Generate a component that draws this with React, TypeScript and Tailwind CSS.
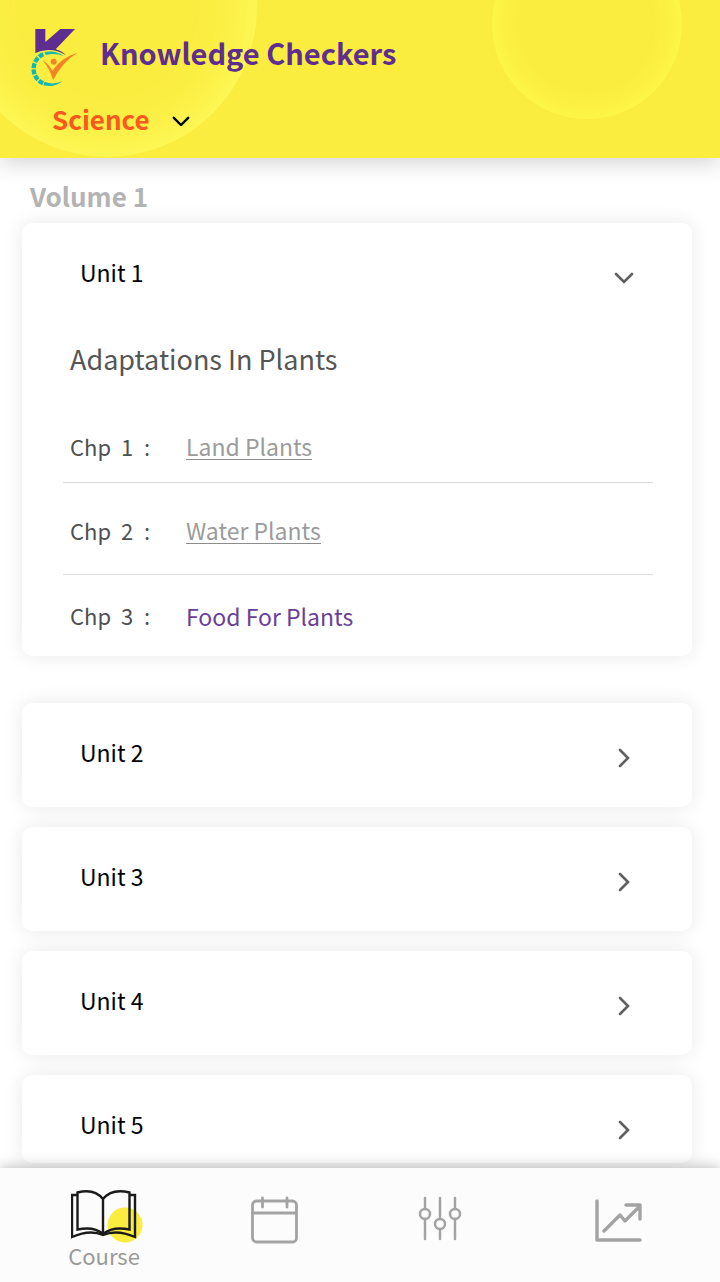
import { useState } from "react";

type Chapter = {
  number: number;
  title: string;
  done: boolean;
};

type Unit = {
  id: number;
  title?: string;
  chapters: Chapter[];
};

const units: Unit[] = [
  {
    id: 1,
    title: "Adaptations In Plants",
    chapters: [
      { number: 1, title: "Land Plants", done: true },
      { number: 2, title: "Water Plants", done: true },
      { number: 3, title: "Food For Plants", done: false },
    ],
  },
  { id: 2, chapters: [] },
  { id: 3, chapters: [] },
  { id: 4, chapters: [] },
  { id: 5, chapters: [] },
];

function Logo() {
  return (
    <svg viewBox="30 24 144 180" className="w-12 h-[60px] shrink-0" aria-hidden="true">
      <path
        d="M46 27H76V66L121 27H165L107 88Q126 93 138 106Q112 89 84 90Q62 91 46 99Z"
        fill="#5f2c91"
      />
      <path
        d="M70 103A47 47 0 0 0 70 190"
        fill="none"
        stroke="#12b9b4"
        strokeWidth="13"
        strokeDasharray="15 4"
      />
      <path d="M74 96Q108 90 131 108Q105 98 77 105Z" fill="#12b9b4" />
      <path d="M74 185Q98 196 128 184Q102 204 70 196Z" fill="#12b9b4" />
      <circle cx="101" cy="125" r="9" fill="#f58228" />
      <path
        d="M67 120Q86 132 97 152Q125 112 173 98Q128 124 99 181Q90 146 67 120Z"
        fill="#f58228"
      />
    </svg>
  );
}

function Chevron({ className }: { className: string }) {
  return (
    <svg
      viewBox="0 0 20 12"
      className={className}
      fill="none"
      stroke="currentColor"
      strokeWidth="2.6"
      strokeLinecap="round"
      aria-hidden="true"
    >
      <path d="M2 2L10 10L18 2" />
    </svg>
  );
}

function Header() {
  return (
    <header className="relative z-10 bg-[#fbed40] shadow-[0_6px_20px_rgba(0,0,0,0.16)] pt-7 pb-[18px]">
      <div className="absolute inset-0 overflow-hidden" aria-hidden="true">
        <div className="absolute -left-[43px] -top-[143px] size-[300px] rounded-full shadow-[inset_0_0_60px_#ffff66]" />
        <div className="absolute left-[492px] -top-[71px] size-[190px] rounded-full shadow-[inset_0_0_32px_#ffff4d]" />
      </div>
      <div className="relative flex gap-[22px] pl-[30px]">
        <Logo />
        <h1 className="text-[29px] leading-[48px] font-bold text-[#5f2c91]">
          Knowledge Checkers
        </h1>
      </div>
      <div className="relative flex items-center w-fit ml-[52px] mt-2.5">
        <select
          aria-label="Subject"
          className="appearance-none bg-transparent pr-10 text-[26px] leading-[42px] font-bold text-[#f9581f] field-sizing-content"
        >
          <option>Science</option>
        </select>
        <Chevron className="absolute right-0 mt-1 w-[18px] text-black pointer-events-none" />
      </div>
    </header>
  );
}

function ChapterRow({ chapter }: { chapter: Chapter }) {
  return (
    <li className="flex items-center h-[92px] pt-1 first:h-[68px] first:pt-0 first:pb-1 last:h-[81px] last:pt-0 pl-[7px] border-b border-[#dedede] last:border-b-0 text-[22px] text-[#505050]">
      <span className="w-[51px]">Chp</span>
      <span className="w-[23px]">{chapter.number}</span>
      <span className="w-[42px]">:</span>
      <a
        href={`#chapter-${chapter.number}`}
        className={
          chapter.done
            ? "text-[23px] leading-[26px] text-[#9b9b9b] border-b border-[#8c8c8c]"
            : "text-[23px] leading-[26px] text-[#6b3d9b]"
        }
      >
        {chapter.title}
      </a>
    </li>
  );
}

type UnitCardProps = {
  unit: Unit;
  open: boolean;
  onToggle: () => void;
};

function UnitCard({ unit, open, onToggle }: UnitCardProps) {
  return (
    <section
      className={
        open
          ? "mb-[27px] bg-white rounded-[10px] shadow-[0_0_20px_rgba(0,0,0,0.09)]"
          : "bg-white rounded-[10px] shadow-[0_0_20px_rgba(0,0,0,0.09)] not-last:min-h-[104px]"
      }
    >
      <button
        type="button"
        aria-expanded={open}
        onClick={onToggle}
        className="flex items-center justify-between w-full h-[88px] pt-2.5 px-[58px] text-[23px] text-black"
      >
        Unit {unit.id}
        <Chevron
          className={open ? "w-5 mt-3 text-[#606060]" : "w-5 mt-3 text-[#606060] -rotate-90"}
        />
      </button>
      {open && unit.chapters.length > 0 && (
        <div className="pl-[41px] pr-[39px] pt-7">
          <h3 className="pl-[7px] text-[27px] leading-10 text-[#555]">{unit.title}</h3>
          <ul className="pt-9">
            {unit.chapters.map((chapter) => (
              <ChapterRow key={chapter.number} chapter={chapter} />
            ))}
          </ul>
        </div>
      )}
    </section>
  );
}

function BottomNav() {
  return (
    <nav className="sticky bottom-0 z-10 mt-auto bg-[#fcfcfc] shadow-[0_0_14px_rgba(0,0,0,0.3)]">
      <ul className="grid grid-cols-[208fr_133fr_198fr_158fr] h-[114px] pr-[23px] text-[#a3a3a3]">
        <li>
          <a href="#course" className="flex flex-col items-center pt-[21px]">
            <svg viewBox="0 0 74 56" className="w-[74px] h-14 ml-2" aria-hidden="true">
              <circle cx="54" cy="36" r="17.5" fill="#fbed40" />
              <g fill="none" stroke="#1a1a1a" strokeWidth="2.4">
                <path d="M7 6H1V48Q19 40 32 46Q46 40 64 48V6H58" />
                <path d="M32 10Q23 -1 6.500 3.500V40.500Q23 37 32 45Q42 37 58.500 40.500V3.500Q41 -1 32 10V45" />
              </g>
            </svg>
            <span className="text-[22px] leading-5 text-[#999]">Course</span>
          </a>
        </li>
        <li className="flex justify-center pt-7">
          <a href="#calendar" aria-label="Calendar">
            <svg
              viewBox="0 0 48 48"
              className="size-12"
              fill="none"
              stroke="currentColor"
              strokeWidth="2.8"
              strokeLinecap="round"
            >
              <rect x="1.500" y="5" width="44" height="41" rx="4" />
              <path d="M2 17H45M11.500 2V11M36 2V11" />
            </svg>
          </a>
        </li>
        <li className="flex justify-center pt-7">
          <a href="#settings" aria-label="Settings">
            <svg
              viewBox="0 0 44 48"
              className="w-11 h-12"
              fill="none"
              stroke="currentColor"
              strokeWidth="2.5"
              strokeLinecap="round"
            >
              <path d="M7 2V13M7 23V43M22 2V23M22 33V43M37 2V13M37 23V43" />
              <circle cx="7" cy="18" r="5" />
              <circle cx="22" cy="28" r="5" />
              <circle cx="37" cy="18" r="5" />
            </svg>
          </a>
        </li>
        <li className="flex justify-center pt-7">
          <a href="#progress" aria-label="Progress">
            <svg
              viewBox="0 0 48 48"
              className="size-12"
              fill="none"
              stroke="currentColor"
              strokeWidth="3.4"
              strokeLinecap="round"
              strokeLinejoin="round"
            >
              <path d="M3 5V44H46M10 35L26 19L31 25L46 10M32 9H46V23" />
            </svg>
          </a>
        </li>
      </ul>
    </nav>
  );
}

export default function App() {
  const [openUnit, setOpenUnit] = useState<number | null>(1);

  return (
    <div className="flex flex-col min-h-screen bg-white font-['Noto_Sans_CJK_SC',sans-serif]">
      <Header />
      <main className="pl-[22px] pr-7 pb-[5px]">
        <h2 className="pl-2 pt-[18px] pb-[7px] text-[26px] leading-10 font-bold text-[#b3b3b3]">
          Volume 1
        </h2>
        <div className="flex flex-col gap-5">
          {units.map((unit) => (
            <UnitCard
              key={unit.id}
              unit={unit}
              open={unit.id === openUnit}
              onToggle={() => setOpenUnit(unit.id === openUnit ? null : unit.id)}
            />
          ))}
        </div>
      </main>
      <BottomNav />
    </div>
  );
}
